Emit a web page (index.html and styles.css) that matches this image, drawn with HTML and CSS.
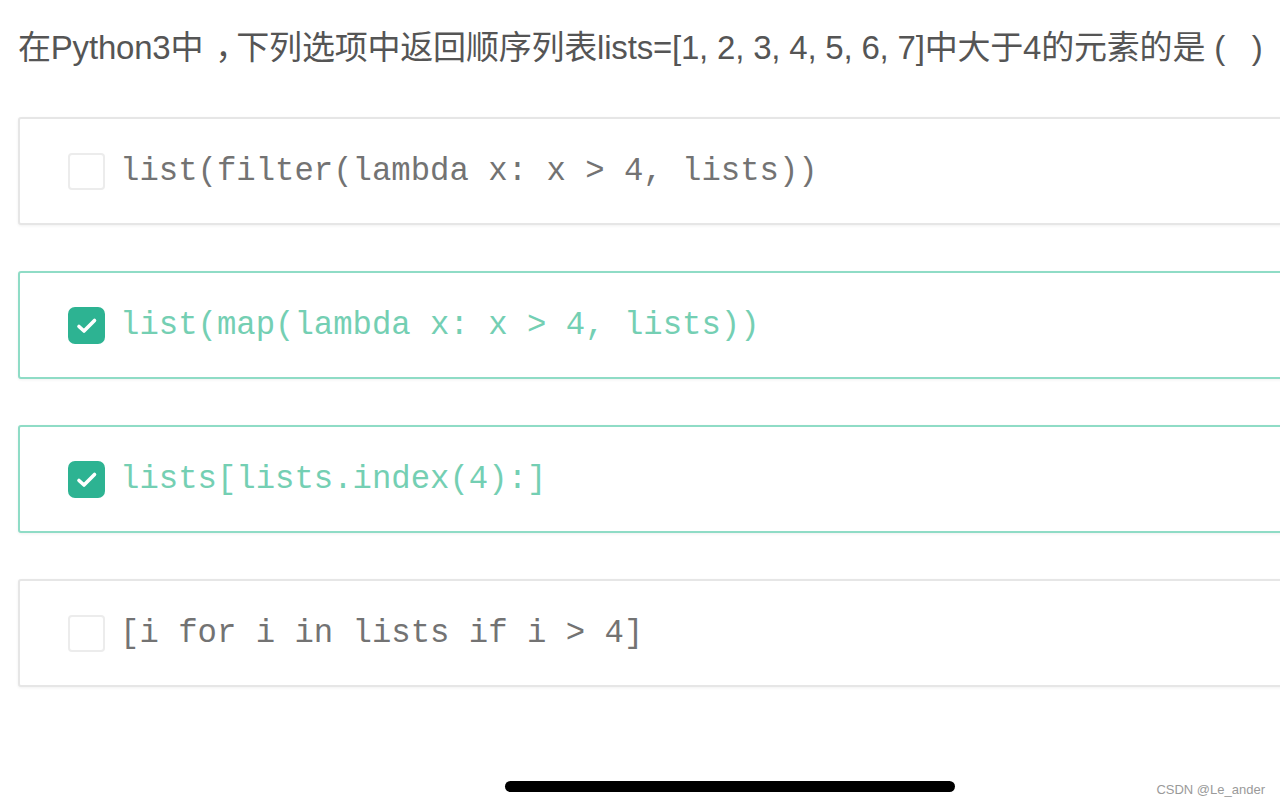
FILE: index.html
```html
<!DOCTYPE html>
<html lang="zh">
<head>
<meta charset="utf-8">
<link rel="stylesheet" href="styles.css">
</head>
<body>
<div class="page">
  <p class="question">在Python3中<span class="punct">，</span>下列选项中返回顺序列表lists=[1, 2, 3, 4, 5, 6, 7]中大于4的元素的是 ( &nbsp;&nbsp;)</p>
  <div class="options">
    <div class="option">
      <span class="box"></span>
      <span class="code">list(filter(lambda x: x &gt; 4, lists))</span>
    </div>
    <div class="option checked">
      <span class="box"><svg viewBox="0 0 37 37" width="37" height="37"><path d="M11 19.5 L16 24 L26.5 13.5" fill="none" stroke="#fff" stroke-width="3.6" stroke-linecap="round" stroke-linejoin="round"/></svg></span>
      <span class="code">list(map(lambda x: x &gt; 4, lists))</span>
    </div>
    <div class="option checked">
      <span class="box"><svg viewBox="0 0 37 37" width="37" height="37"><path d="M11 19.5 L16 24 L26.5 13.5" fill="none" stroke="#fff" stroke-width="3.6" stroke-linecap="round" stroke-linejoin="round"/></svg></span>
      <span class="code">lists[lists.index(4):]</span>
    </div>
    <div class="option">
      <span class="box"></span>
      <span class="code">[i for i in lists if i &gt; 4]</span>
    </div>
  </div>
  <div class="footer">
    <div class="home-bar"></div>
    <div class="watermark">CSDN @Le_ander</div>
  </div>
</div>
</body>
</html>
```

FILE: styles.css
```css
* { box-sizing: border-box; }
html, body {
  margin: 0;
  padding: 0;
  background: #ffffff;
  overflow: hidden;
}
.page {
  width: 1280px;
  height: 805px;
  padding: 24px 0 0 18px;
  display: flex;
  flex-direction: column;
}
.question {
  margin: 0;
  font-family: "Liberation Sans", "Noto Sans CJK SC", sans-serif;
  font-size: 33px;
  line-height: 48px;
  height: 48px;
  color: #555555;
  white-space: nowrap;
  letter-spacing: -0.2px;
}
.punct {
  margin-left: 12px;
  letter-spacing: -12px;
}
.options {
  margin-top: 45px;
  display: flex;
  flex-direction: column;
  gap: 46px;
}
.option {
  width: 1300px;
  height: 108px;
  border: 2px solid #e6e6e6;
  border-radius: 3px;
  background: #fff;
  box-shadow: 0 1px 3px rgba(0,0,0,0.06);
  display: flex;
  align-items: center;
  padding-left: 48px;
  gap: 15px;
}
.option.checked {
  border-color: #8fdcc6;
}
.box {
  width: 37px;
  height: 37px;
  border: 2px solid #ececec;
  border-radius: 4px;
  background: #fff;
  display: flex;
  align-items: center;
  justify-content: center;
  flex: none;
  overflow: hidden;
}
.checked .box {
  background: #2db392;
  border: none;
  border-radius: 7px;
}
.code {
  font-family: "Liberation Mono", monospace;
  font-size: 32.3px;
  color: #737373;
  white-space: nowrap;
}
.checked .code {
  color: #74cfb3;
}
.footer {
  margin-top: auto;
  height: 36px;
  display: flex;
  align-items: flex-start;
  position: relative;
}
.home-bar {
  margin-left: 487px;
  margin-top: 12px;
  width: 450px;
  height: 11px;
  border-radius: 6px;
  background: #000;
}
.watermark {
  position: absolute;
  right: 15px;
  top: 13px;
  font-family: "Liberation Sans", sans-serif;
  font-size: 13px;
  color: #9a9a9a;
}
```
